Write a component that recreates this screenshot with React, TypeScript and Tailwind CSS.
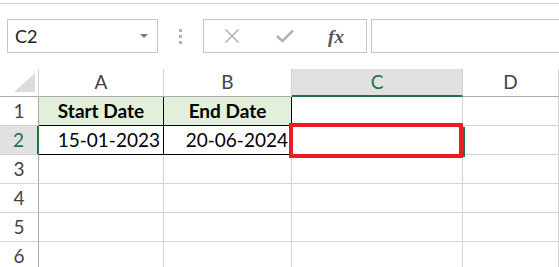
import { useState } from "react";

const font = { fontFamily: "Lato, 'Liberation Sans', sans-serif" };

const cols = [
  { key: "A", w: "w-[125px]" },
  { key: "B", w: "w-[128px]" },
  { key: "C", w: "w-[171px]" },
  { key: "D", w: "flex-1" },
];

const App = () => {
  const [active] = useState("C2");
  const rows = [1, 2, 3, 4, 5, 6];

  const cellText = (r: number, c: string) => {
    if (r === 1 && c === "A") return "Start Date";
    if (r === 1 && c === "B") return "End Date";
    if (r === 2 && c === "A") return "15-01-2023";
    if (r === 2 && c === "B") return "20-06-2024";
    return "";
  };

  return (
    <div className="w-[559px] h-[267px] overflow-hidden bg-white" style={font}>
      {/* top strip */}
      <div className="h-[3px]"></div>
      <div className="h-[1px] bg-[#d4d4d4]"></div>

      {/* formula bar */}
      <div className="flex items-center h-[34px] mt-[15px]">
        <div className="ml-[7px] w-[151px] h-[34px] border border-[#c6c6c6] flex items-center justify-between pl-[7px] pr-[9px]">
          <span className="text-[18px] text-[#222] leading-none">{active}</span>
          <svg width="8" height="5" viewBox="0 0 8 5">
            <path d="M0 0 H8 L4 4 Z" fill="#7a7a7a" />
          </svg>
        </div>
        <div className="w-[45px] flex flex-col items-center gap-[3px]">
          <div className="w-[3px] h-[3px] bg-[#b0b0b0]"></div>
          <div className="w-[3px] h-[3px] bg-[#b0b0b0]"></div>
          <div className="w-[3px] h-[3px] bg-[#b0b0b0]"></div>
        </div>
        <div className="w-[164px] h-[34px] border border-[#c6c6c6] flex items-center">
          <div className="w-[56px] flex justify-center">
            <svg width="16" height="16" viewBox="0 0 16 16">
              <path d="M1.5 1.5 L14.5 14.5 M14.5 1.5 L1.5 14.5" stroke="#b4b4b4" strokeWidth="1.6" />
            </svg>
          </div>
          <div className="w-[50px] flex justify-center">
            <svg width="18" height="14" viewBox="0 0 18 14">
              <path d="M1 7 L6.5 12 L17 1.5" stroke="#b4b4b4" strokeWidth="2.6" fill="none" />
            </svg>
          </div>
          <div className="flex-1 flex justify-center pr-[4px]">
            <span
              className="text-[19px] italic font-bold text-[#555] leading-none"
              style={{ fontFamily: "'Liberation Serif', serif" }}
            >
              fx
            </span>
          </div>
        </div>
        <div className="ml-[4px] flex-1 h-[34px] border border-r-0 border-[#c6c6c6]"></div>
      </div>

      {/* sheet */}
      <div className="mt-[16px] relative">
        {/* column headers */}
        <div className="flex h-[28px]">
          <div className="w-[39px] h-full flex items-end justify-end pr-[3px] pb-[4px] border-r border-[#d4d4d4] border-b border-b-[#ababab]">
            <svg width="21" height="19" viewBox="0 0 21 19">
              <path d="M21 0 V19 H0 Z" fill="#dcdcdc" />
            </svg>
          </div>
          {cols.map((c) =>
            c.key === "C" ? (
              <div
                key={c.key}
                className={`${c.w} h-full bg-[#e1e1e1] border-r border-[#d4d4d4] border-b-2 border-b-[#217346] flex items-center justify-center text-[19px] text-[#217346]`}
              >
                {c.key}
              </div>
            ) : (
              <div
                key={c.key}
                className={`${c.w} h-full border-r border-[#d4d4d4] border-b border-b-[#ababab] flex items-center justify-center text-[19px] text-[#444]`}
              >
                {c.key}
              </div>
            )
          )}
        </div>

        {rows.map((r) => (
          <div key={r} className="flex h-[29px]">
            {r === 2 ? (
              <div className="w-[39px] h-full bg-[#e1e1e1] border-r-2 border-[#217346] border-b border-b-[#d4d4d4] flex items-center justify-center text-[19px] text-[#217346]">
                {r}
              </div>
            ) : (
              <div className="w-[39px] h-full border-r border-[#ababab] border-b border-b-[#d4d4d4] flex items-center justify-center text-[19px] text-[#444]">
                {r}
              </div>
            )}
            {cols.map((c) => {
              const inTable = (r === 1 || r === 2) && (c.key === "A" || c.key === "B");
              const header = r === 1 && inTable;
              const text = cellText(r, c.key);
              if (inTable) {
                return (
                  <div
                    key={c.key}
                    className={`${c.w} h-full border-r border-b border-black flex items-center text-[19px] text-black whitespace-nowrap ${
                      header ? "bg-[#e2efda] font-bold justify-center" : "justify-end pr-[3px]"
                    }`}
                  >
                    {text}
                  </div>
                );
              }
              return (
                <div key={c.key} className={`${c.w} h-full border-r border-b border-[#d4d4d4]`}></div>
              );
            })}
          </div>
        ))}

        {/* selection overlay on C2 */}
        <div className="absolute left-[463px] top-[58px] w-[2px] h-[30px] bg-[#217346]"></div>
        <div className="absolute left-[289px] top-[54px] w-[174px] h-[35px] border-4 border-[#ed1c24]"></div>
      </div>
    </div>
  );
};

export default App;
